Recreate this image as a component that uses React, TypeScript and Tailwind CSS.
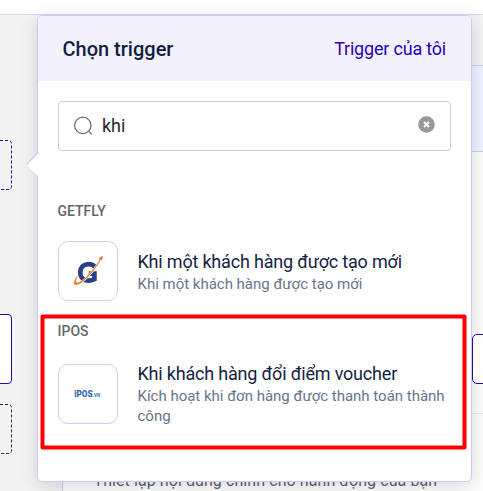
import React from 'react';

function GetflyLogo() {
  return (
    <svg viewBox="0 0 60 60" className="h-[60px] w-[60px]">
      <path
        d="M37.4 25.8C35.6 23.4 33 22.6 30 22.8C25.4 23.1 22 26.2 22 31.3C22 36.5 25.6 40 30.3 40C33.3 40 35.2 39.4 36.6 38.6V32.8H30.8"
        fill="none"
        stroke="#2b4186"
        strokeWidth="4.9"
      />
      <path d="M42.8 18.5C37 29 25.5 42 18.2 43.6" fill="none" stroke="#fff" strokeWidth="2.2" />
      <path d="M43 18.5C37 29 25.5 42.6 18.2 44.3C14.5 45 14.7 40 19.8 34.6C16.9 39.6 16.7 42.6 19 42.3C25 41 36.5 28.5 42.5 18Z" fill="#ee7422" stroke="#ee7422" strokeWidth="0.3" />
      <path d="M45.2 14.4L44.8 19L43.2 17.9L41.7 18.6L41.5 16.5Z" fill="#e36b20" />
    </svg>
  );
}

function IposLogo() {
  return (
    <svg viewBox="0 0 60 60" className="h-[60px] w-[60px]">
      <text x="15.7" y="32.8" fill="#2f6bb0" fontFamily="Roboto, sans-serif" fontWeight="900" fontSize="8.6" textLength="19" lengthAdjust="spacingAndGlyphs">iPOS</text>
      <text x="34.7" y="32.8" fill="#4a82bd" fontFamily="Roboto, sans-serif" fontWeight="900" fontSize="5" textLength="7.8" lengthAdjust="spacingAndGlyphs">.VN</text>
      <rect x="15.9" y="26.4" width="1.9" height="1.6" fill="#f2923a" />
    </svg>
  );
}

function TriggerItem({ logo, title, children }: { logo: React.ReactNode; title: string; children: React.ReactNode }) {
  return (
    <div className="flex items-center gap-5">
      <div className="flex h-[60px] w-[60px] shrink-0 items-center justify-center rounded-[10px] border border-[#d2cbfb]">{logo}</div>
      <div className="-ml-[0.5px] min-w-0">
        <div className="text-[18px] leading-6 tracking-[-0.19px] whitespace-nowrap text-[#13233f]">{title}</div>
        <div className="text-[15px] leading-5 tracking-[-0.01px] text-[#67748a]">{children}</div>
      </div>
    </div>
  );
}

function Popover() {
  return (
    <section className="absolute top-[15px] left-[37px] h-[467px] w-[435px] rounded-[5px] border border-[#d0c8f9] bg-white shadow-[0_4px_18px_rgba(0,0,0,0.15)]">
      <svg className="absolute top-[135px] -left-3 h-[28px] w-[13px]" viewBox="0 0 13 28">
        <path d="M13 1.5L0.7 13.8L13 26.1Z" fill="#fff" />
        <path d="M12 1.5L0.5 13.5" fill="none" stroke="#d0c8f9" strokeWidth="1.1" />
      </svg>
      <header className="flex h-[65px] items-center justify-between rounded-t-[4px] bg-[#f3f1fd] pr-[25px] pl-[24.5px]">
        <h1 className="text-[20px] leading-6 font-medium text-[#101f40]">Chọn trigger</h1>
        <span className="text-[18px] leading-6 tracking-[-0.2px] text-[#2b00b7]">Trigger của tôi</span>
      </header>
      <div className="px-5 pt-5">
        <div className="flex h-[50px] items-center rounded-[4px] border border-[#cfced6] pr-[15px] pl-[15px]">
          <svg viewBox="0 0 20 20" className="h-5 w-5" fill="none" stroke="#68686b" strokeWidth="1.2">
            <circle cx="8.8" cy="9.4" r="8.2" />
            <path d="M14.6 15.2L17.8 18.4" />
          </svg>
          <span className="ml-2 flex-1 text-[18px] leading-6 text-[#282829]">khi</span>
          <svg viewBox="0 0 17 17" className="mb-[3px] h-[17px] w-[17px]">
            <circle cx="8.5" cy="8.5" r="8.3" fill="#999" />
            <path d="M6 6L11 11M11 6L6 11" stroke="#fff" strokeWidth="1.9" />
          </svg>
        </div>
        <h2 className="mt-[50px] -ml-[0.5px] text-[14px] leading-5 font-medium text-[#666]">GETFLY</h2>
        <div className="mt-5 [&>div>div:last-child]:pt-[2px]">
          <TriggerItem logo={<GetflyLogo />} title="Khi một khách hàng được tạo mới">Khi một khách hàng được tạo mới</TriggerItem>
        </div>
        <h2 className="mt-5 -ml-[0.5px] text-[14px] leading-5 font-medium text-[#666]">IPOS</h2>
        <div className="mt-[21px]">
          <TriggerItem logo={<IposLogo />} title="Khi khách hàng đổi điểm voucher">Kích hoạt khi đơn hàng được thanh toán thành công</TriggerItem>
        </div>
      </div>
    </section>
  );
}

export default function App() {
  return (
    <main className="relative h-[491px] w-[483px] overflow-hidden bg-[#f3f3f3] font-[Roboto,sans-serif]">
      <div className="h-[15px] border-b border-[#d6daeb] bg-white" />
      <div className="mt-[50px] ml-[62px] h-[426px] border-l border-[#bdd1fb] bg-[#fdfdfd]">
        <div className="h-[87px] border-y border-[#bdd1fb] bg-[#edf3ff]" />
        <div className="h-[262px] border-b border-[#e6e6e9]" />
        <p className="mt-[57px] ml-[30.5px] text-[16px] leading-5 tracking-[0.08px] whitespace-nowrap text-[#5c6473]">Thiết lập nội dung chính cho hành động của bạn</p>
      </div>
      <svg className="absolute inset-0 h-[491px] w-[483px]" viewBox="0 0 483 491" fill="none">
        <path d="M0 140.5H8Q11.5 140.5 11.5 144V186Q11.5 189.5 8 189.5H0" stroke="#2b00b7" strokeDasharray="3 2" />
        <path d="M0 314.5H8Q11.5 314.5 11.5 318V380Q11.5 383.5 8 383.5H0" fill="#fff" stroke="#2b00b7" />
        <path d="M0 404.5H8Q11.5 404.5 11.5 408V450Q11.5 453.5 8 453.5H0" stroke="#1c2c49" strokeDasharray="3 2" />
      </svg>
      <Popover />
      <div className="absolute top-[334px] left-[472px] h-[50px] w-[80px] rounded-[5px] border border-[#2b00b7] bg-[#fdfdfd]" />
      <svg className="absolute inset-0 h-[491px] w-[483px]" viewBox="0 0 483 491" fill="none">
        <rect x="42.5" y="316.5" width="422" height="131" stroke="#ff0000" strokeWidth="4" strokeLinejoin="round" />
      </svg>
    </main>
  );
}
